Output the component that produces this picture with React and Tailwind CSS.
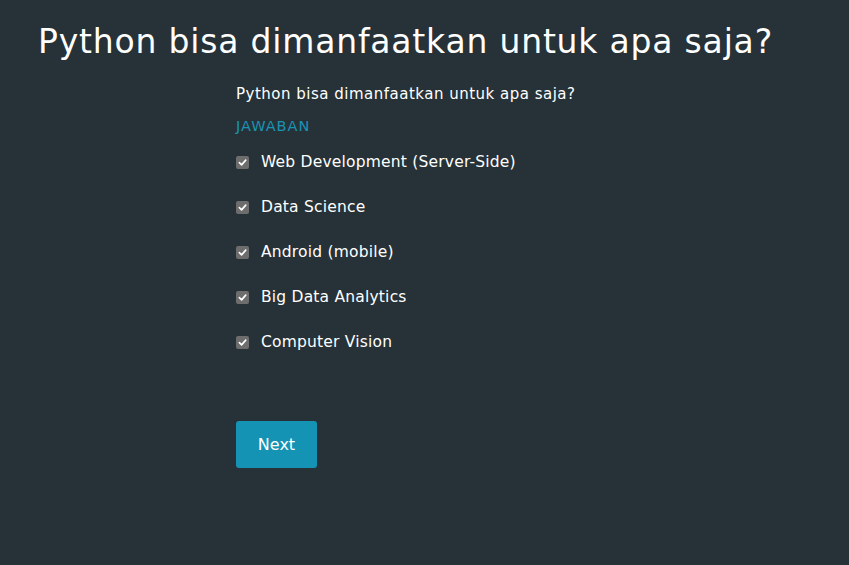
import { useState } from 'react';

const OPTIONS = [
  'Web Development (Server-Side)',
  'Data Science',
  'Android (mobile)',
  'Big Data Analytics',
  'Computer Vision',
];

const CheckBox = ({ checked, onToggle }) => (
  <button
    type="button"
    onClick={onToggle}
    className="w-[13px] h-[13px] rounded-[2px] bg-[#6d6d6d] flex items-center justify-center shrink-0"
  >
    {checked && (
      <svg width="9" height="9" viewBox="0 0 10 10">
        <path d="M1.5 5.2 L4 7.6 L8.6 2.4" fill="none" stroke="#ffffff" strokeWidth="1.8" strokeLinecap="round" strokeLinejoin="round" />
      </svg>
    )}
  </button>
);

const App = () => {
  const [checked, setChecked] = useState(OPTIONS.map(() => true));

  const toggle = i => {
    setChecked(prev => prev.map((v, idx) => (idx === i ? !v : v)));
  };

  return (
    <div
      className="min-h-[565px] bg-[#263238] text-white"
      style={{ fontFamily: '"DejaVu Sans", "Noto Sans", sans-serif' }}
    >
      {/* Title */}
      <h1 className="pl-[38px] pt-[20px] text-[33px] leading-[44px] tracking-[0.8px]">
        Python bisa dimanfaatkan untuk apa saja?
      </h1>

      {/* Question */}
      <div className="pl-[236px] pt-[19px]">
        <p className="text-[15px] leading-[22px] tracking-[0.5px]">Python bisa dimanfaatkan untuk apa saja?</p>
        <p className="mt-[11px] text-[14.5px] leading-[20px] tracking-[1px] text-[#1a93b3]">JAWABAN</p>

        <div className="mt-[4px] flex flex-col">
          {OPTIONS.map((opt, i) => (
            <label key={opt} className="h-[45px] flex items-center gap-[12px] cursor-pointer">
              <CheckBox checked={checked[i]} onToggle={() => toggle(i)} />
              <span className="text-[15.5px] tracking-[0.2px]">{opt}</span>
            </label>
          ))}
        </div>

        <button className="mt-[56px] w-[81px] h-[47px] rounded-[3px] bg-[#1593b5] text-[16px] text-white">
          Next
        </button>
      </div>
    </div>
  );
};

export default App;
